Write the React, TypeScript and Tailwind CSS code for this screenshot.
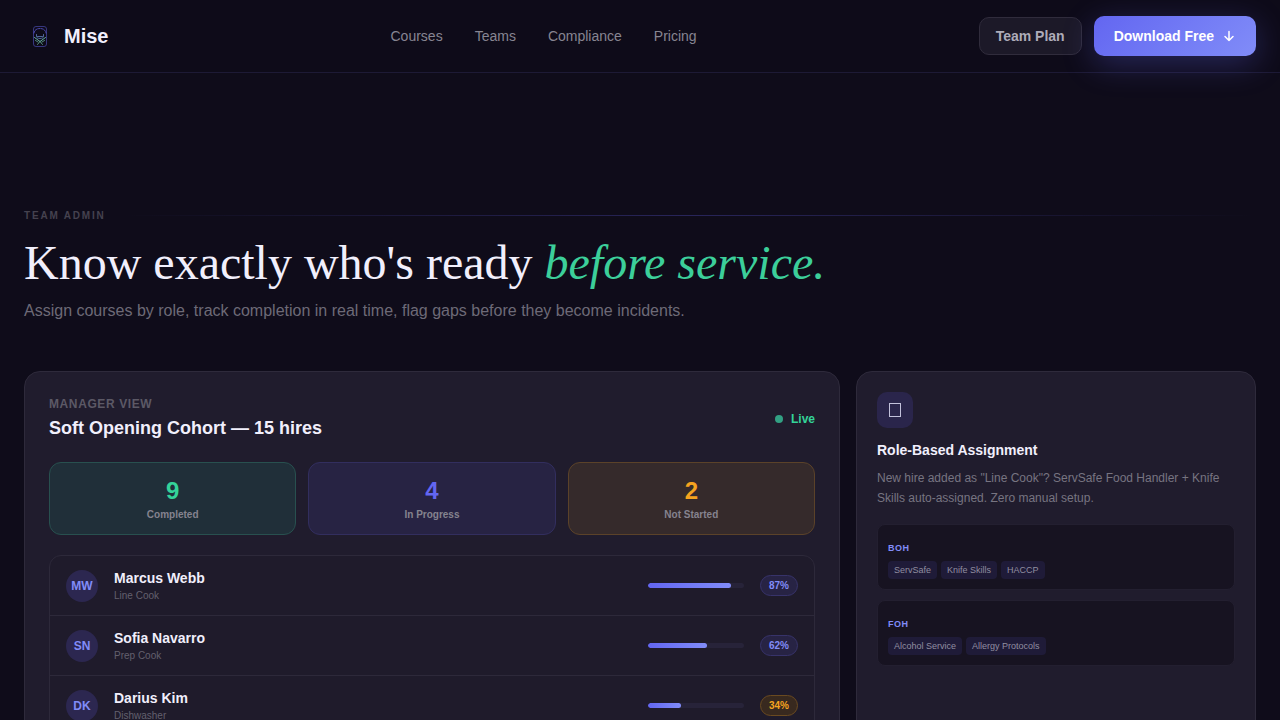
import React from "react";

const links = ["Courses", "Teams", "Compliance", "Pricing"];

const stats = [
  { value: 9, label: "Completed", box: "bg-[#202f39] border-[#28504f]", text: "text-[#34d399]" },
  { value: 4, label: "In Progress", box: "bg-[#272343] border-[#322e5e]", text: "text-[#6366f1]" },
  { value: 2, label: "Not Started", box: "bg-[#352a2b] border-[#5b4229]", text: "text-[#f5a31f]" },
];

const hires = [
  { initials: "MW", name: "Marcus Webb", role: "Line Cook", progress: 87 },
  { initials: "SN", name: "Sofia Navarro", role: "Prep Cook", progress: 62 },
  { initials: "DK", name: "Darius Kim", role: "Dishwasher", progress: 34 },
];

const groups = [
  { name: "BOH", courses: ["ServSafe", "Knife Skills", "HACCP"] },
  { name: "FOH", courses: ["Alcohol Service", "Allergy Protocols"] },
];

const Logo: React.FC = () => (
  <svg width="32" height="32" viewBox="0 0 32 32" fill="none" aria-hidden="true">
    <rect x="9.5" y="6.5" width="13" height="20" rx="2.5" stroke="#4547a0" strokeOpacity="0.75" />
    <g strokeLinecap="round" strokeLinejoin="round">
      <path d="M10 13c.5-3 2.8-4.500 6-4.500s5.500 1.500 6 4.500" stroke="#5a55d0" strokeOpacity="0.8" strokeDasharray="2 1" />
      <path d="M12.500 14.500v2c0 1 1.500 2 3.500 2s3.500-1 3.500-2v-2M13.500 16.500h5" stroke="#6c8fd0" strokeOpacity="0.7" />
      <path d="M10.500 17.500l5.500 4 5.500-4" stroke="#74c8b4" strokeOpacity="0.85" />
      <path d="M11.500 20.500l2.500 1.500M20.500 20.500l-2.500 1.500M13.500 24.500l2.500-3 2.500 3" stroke="#6cbf9e" strokeOpacity="0.7" />
    </g>
  </svg>
);

const Navbar: React.FC = () => (
  <header className="border-b border-[#1d1a35] bg-[#0e0b19]">
    <nav className="flex h-18 items-center justify-between px-6">
      <a href="#" className="flex items-center gap-2 text-xl font-bold text-[#f1effc]">
        <Logo />
        Mise
      </a>
      <div className="flex items-center gap-8 text-sm text-[#878592]">
        {links.map((link) => (
          <a key={link} href="#">{link}</a>
        ))}
      </div>
      <div className="flex items-center gap-3 text-sm font-semibold">
        <button className="rounded-[10px] border border-[#302c3c] bg-[#1c1928] px-4 py-2 text-[#aeacb9]">Team Plan</button>
        <button className="flex h-10 items-center gap-2 rounded-[10px] bg-linear-135 from-[#6366f1] to-[#818cf8] px-5 text-white shadow-[0_8px_32px_rgba(99,102,241,0.3)]">
          Download Free
          <svg width="14" height="14" viewBox="0 0 14 14" fill="none" stroke="currentColor" strokeWidth="1.5" strokeLinecap="round" strokeLinejoin="round" aria-hidden="true">
            <path d="M7 2.5v9M3 7.5l4 4 4-4" />
          </svg>
        </button>
      </div>
    </nav>
  </header>
);

const ManagerCard: React.FC = () => (
  <section className="col-span-2 rounded-2xl border border-[#2e2a3b] bg-[#201c2d] p-6">
    <div className="mb-5 flex items-center justify-between">
      <div>
        <p className="mb-0.5 text-xs font-semibold tracking-wider text-[#5c5966]">MANAGER VIEW</p>
        <h3 className="text-lg font-bold text-[#f1effc]">Soft Opening Cohort — 15 hires</h3>
      </div>
      <div className="flex items-center gap-2 text-xs font-semibold text-[#34d399]">
        <span className="size-2 rounded-full bg-[#32a083]" />
        Live
      </div>
    </div>
    <div className="mb-5 grid grid-cols-3 gap-3">
      {stats.map((s) => (
        <div key={s.label} className={`rounded-xl border p-3 text-center ${s.box}`}>
          <div className={`text-2xl font-bold ${s.text}`}>{s.value}</div>
          <div className="text-[10px] leading-[15px] font-semibold text-[#85838f]">{s.label}</div>
        </div>
      ))}
    </div>
    <ul className="divide-y divide-[#2d293a] rounded-xl border border-[#2d293a] bg-[#1f1b2b]">
      {hires.map((h) => {
        const low = h.progress < 50;
        return (
          <li key={h.name} className="flex items-center gap-4 px-4 py-3">
            <span className="flex size-8 items-center justify-center rounded-full bg-[#2c2750] text-xs font-bold text-[#818cf8]">{h.initials}</span>
            <div className="flex-1">
              <div className="text-sm font-semibold text-[#f1effc]">{h.name}</div>
              <div className="text-[10px] leading-[15px] text-[#63606e]">{h.role}</div>
            </div>
            <div className="h-[5px] w-24 overflow-hidden rounded-full bg-[#272339]">
              <div className="h-full rounded-full bg-linear-to-r from-[#6366f1] to-[#818cf8]" style={{ width: `${h.progress}%` }} />
            </div>
            <span className={`rounded-full border px-2 py-0.5 text-[10px] leading-[15px] font-bold ${low ? "border-[#6a4a20] bg-[#38291f] text-[#f5a31f]" : "border-[#37336a] bg-[#272344] text-[#818cf8]"}`}>
              {h.progress}%
            </span>
          </li>
        );
      })}
    </ul>
  </section>
);

const RoleCard: React.FC = () => (
  <section className="rounded-2xl border border-[#2e2a3b] bg-[#201c2d] p-5">
    <div className="mb-3 flex size-9 items-center justify-center rounded-[10px] bg-[#2a254b]">
      <span className="h-3.5 w-3 border border-[#c3c1dc]" />
    </div>
    <h3 className="mb-2 text-sm font-bold text-[#f1effc]">Role-Based Assignment</h3>
    <p className="mb-4 text-xs leading-5 text-[#777481]">
      New hire added as "Line Cook"? ServSafe Food Handler + Knife Skills auto-assigned. Zero manual setup.
    </p>
    <div className="flex flex-col gap-2.5">
      {groups.map((g) => (
        <div key={g.name} className="rounded-lg border border-[#231f30] bg-[#171321] p-2.5">
          <h4 className="text-[9px] leading-[26px] font-bold tracking-wider text-[#818cf8]">{g.name}</h4>
          <div className="flex gap-1">
            {g.courses.map((c) => (
              <span key={c} className="rounded bg-[#1f1b38] px-1.5 text-[9px] leading-[18px] text-[#918ea0]">{c}</span>
            ))}
          </div>
        </div>
      ))}
    </div>
  </section>
);

const App: React.FC = () => (
  <div className="min-h-screen bg-[#0f0c1a] font-['Liberation_Sans',Arial,sans-serif]">
    <Navbar />
    <main className="px-6 pt-[135px] pb-24">
      <div className="mb-3 flex items-center gap-4">
        <h2 className="text-[10px] leading-[15px] font-bold tracking-[0.18em] text-[#45424f]">TEAM ADMIN</h2>
        <div className="h-px flex-1 bg-linear-to-r from-transparent via-[#28255a] to-transparent" />
      </div>
      <h1 className="mb-2 font-['Liberation_Serif',serif] text-5xl leading-[56px] text-[#f1effc]">
        Know exactly who's ready <em className="text-[#3ccf9a]">before service.</em>
      </h1>
      <p className="mb-12 text-base text-[#6d6a77]">
        Assign courses by role, track completion in real time, flag gaps before they become incidents.
      </p>
      <div className="grid grid-cols-3 gap-4">
        <ManagerCard />
        <RoleCard />
      </div>
    </main>
  </div>
);

export default App;
